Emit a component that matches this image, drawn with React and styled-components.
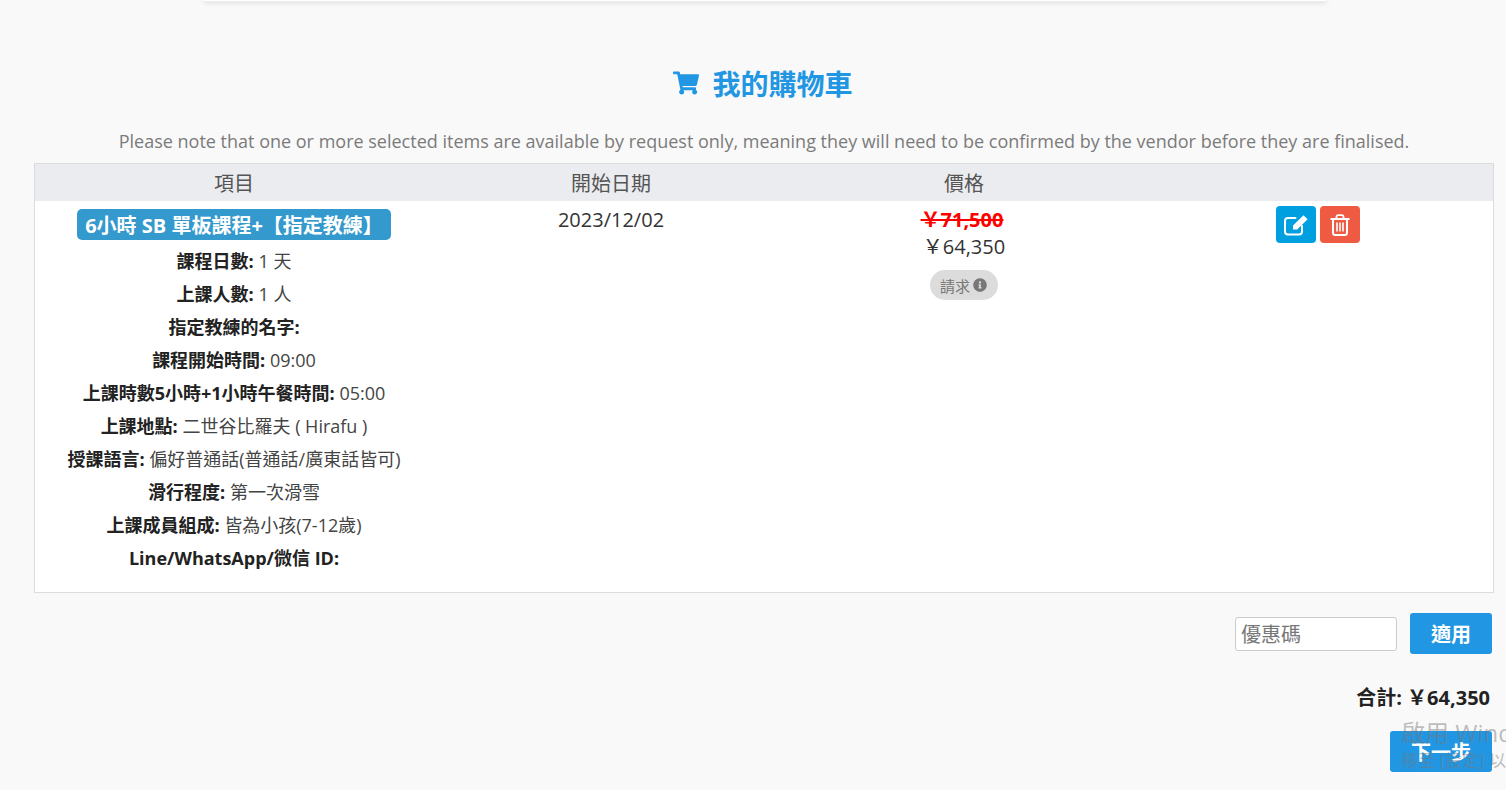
import React from 'react';
import styled, { createGlobalStyle } from 'styled-components';
import { FaShoppingCart, FaInfoCircle } from 'react-icons/fa';

const font = `'Open Sans', 'Noto Sans CJK TC', sans-serif`;

const GlobalStyle = createGlobalStyle`
  html, body {
    margin: 0;
    padding: 0;
    height: 790px;
    overflow: hidden;
    background: #f9f9f9;
    font-family: ${font};
  }
`;

const details = [
  ['課程日數:', '1 天'],
  ['上課人數:', '1 人'],
  ['指定教練的名字:', ''],
  ['課程開始時間:', '09:00'],
  ['上課時數5小時+1小時午餐時間:', '05:00'],
  ['上課地點:', '二世谷比羅夫 ( Hirafu )'],
  ['授課語言:', '偏好普通話(普通話/廣東話皆可)'],
  ['滑行程度:', '第一次滑雪'],
  ['上課成員組成:', '皆為小孩(7-12歲)'],
  ['Line/WhatsApp/微信 ID:', ''],
];

const EditIcon = () => (
  <svg width="26" height="22" viewBox="0 0 26 22" fill="none">
    <path
      d="M12.5 4H5C3.3 4 2 5.3 2 7v10.5c0 1.7 1.3 3 3 3h11c1.7 0 3-1.3 3-3V12"
      stroke="currentColor"
      strokeWidth="2"
      strokeLinecap="round"
    />
    <path
      d="M20.5 1.2 24.6 5.2 14.2 15.6H10V11.5Z"
      fill="currentColor"
    />
  </svg>
);

const TrashIcon = () => (
  <svg width="20" height="22" viewBox="0 0 20 22" fill="none" stroke="currentColor">
    <path d="M0.5 5H19.5" strokeWidth="2" />
    <path d="M6.5 4.5V2.8C6.5 1.8 7.2 1.2 8 1.2H12C12.8 1.2 13.5 1.8 13.5 2.8V4.5" strokeWidth="1.8" />
    <path d="M3 5V18.5C3 20 4 21 5.2 21H14.8C16 21 17 20 17 18.5V5" strokeWidth="2" />
    <path d="M7 8.5V17.5M10 8.5V17.5M13 8.5V17.5" strokeWidth="1.6" />
  </svg>
);

const App = () => {
  return (
    <Page>
      <GlobalStyle />
      <TopCard />
      <Title>
        <FaShoppingCart />
        <span>我的購物車</span>
      </Title>
      <Note>
        Please note that one or more selected items are available by request only, meaning they will need to be confirmed by the vendor before they are finalised.
      </Note>
      <Table>
        <HeaderRow>
          <HeaderCell>項目</HeaderCell>
          <HeaderCell>開始日期</HeaderCell>
          <HeaderCell>價格</HeaderCell>
          <HeaderCell />
        </HeaderRow>
        <BodyRow>
          <ItemCell>
            <ItemName>6小時 SB 單板課程+【指定教練】</ItemName>
            {details.map(([label, value]) => (
              <Detail key={label}>
                <b>{label}</b> {value}
              </Detail>
            ))}
          </ItemCell>
          <DateCell>2023/12/02</DateCell>
          <PriceCell>
            <OldPrice>￥71,500</OldPrice>
            <NewPrice>￥64,350</NewPrice>
            <RequestPill>
              請求 <FaInfoCircle />
            </RequestPill>
          </PriceCell>
          <ActionCell>
            <IconButton $color="#009fdf"><EditIcon /></IconButton>
            <IconButton $color="#ee5a42"><TrashIcon /></IconButton>
          </ActionCell>
        </BodyRow>
      </Table>
      <CouponRow>
        <CouponInput placeholder="優惠碼" />
        <ApplyButton>適用</ApplyButton>
      </CouponRow>
      <Total>合計: ￥64,350</Total>
      <NextRow>
        <NextButton>下一步</NextButton>
      </NextRow>
      <Watermark>
        <WatermarkTitle>啟用 Windows</WatermarkTitle>
        <WatermarkHint>移至 [設定] 以啟用 Windows。</WatermarkHint>
      </Watermark>
    </Page>
  );
};

const Page = styled.div`
  position: relative;
  height: 790px;
  overflow: hidden;
  padding: 0 14px 0 34px;
  box-sizing: border-box;
`;

const TopCard = styled.div`
  width: 1122px;
  height: 1px;
  margin-left: 170px;
  background: #fff;
  box-shadow: 0 1px 5px rgba(0, 0, 0, 0.4);
`;

const Title = styled.h2`
  display: flex;
  justify-content: center;
  align-items: center;
  gap: 13px;
  height: 40px;
  margin: 62px 0 0;
  font-size: 28px;
  font-weight: 700;
  color: #2196e3;

  svg {
    font-size: 26px;
  }
`;

const Note = styled.p`
  margin: 20px 0 0;
  padding-left: 2px;
  height: 40px;
  line-height: 37px;
  text-align: center;
  font-size: 18px;
  color: #7b7b7b;
  white-space: nowrap;
`;

const Table = styled.div`
  width: 1460px;
  height: 430px;
  box-sizing: border-box;
  border: 1px solid #dcdcdc;
  background: #fff;
`;

const columns = `
  display: grid;
  grid-template-columns: 398px 356px 350px 354px;
`;

const HeaderRow = styled.div`
  ${columns}
  height: 37px;
  background: #ebecef;
`;

const HeaderCell = styled.div`
  text-align: center;
  line-height: 39px;
  font-size: 20px;
  color: #555;
`;

const BodyRow = styled.div`
  ${columns}
`;

const ItemCell = styled.div`
  display: flex;
  flex-direction: column;
  align-items: center;
  padding-top: 8px;
`;

const ItemName = styled.div`
  height: 31px;
  line-height: 33px;
  padding: 0 8px;
  margin-bottom: 5px;
  border-radius: 5px;
  background: #3499cc;
  color: #fff;
  font-size: 20px;
  font-weight: 700;
  white-space: nowrap;
`;

const Detail = styled.div`
  height: 33px;
  line-height: 33px;
  font-size: 18px;
  color: #444;
  white-space: nowrap;

  b {
    color: #222;
  }
`;

const DateCell = styled.div`
  text-align: center;
  padding-top: 6px;
  line-height: 26px;
  font-size: 20px;
  color: #333;
`;

const PriceCell = styled.div`
  display: flex;
  flex-direction: column;
  align-items: center;
  padding-top: 6px;
`;

const OldPrice = styled.div`
  line-height: 26px;
  font-size: 20px;
  font-weight: 700;
  color: #f00;
  text-decoration: line-through;
  margin-right: 4px;
`;

const NewPrice = styled.div`
  line-height: 28px;
  font-size: 20px;
  color: #333;
`;

const RequestPill = styled.div`
  display: flex;
  align-items: center;
  gap: 3px;
  height: 30px;
  margin-top: 9px;
  padding: 0 11px 0 10px;
  border-radius: 15px;
  background: #dcdcdc;
  color: #777;
  font-size: 15px;

  svg {
    font-size: 14px;
  }
`;

const ActionCell = styled.div`
  display: flex;
  justify-content: center;
  gap: 4px;
  padding: 5px 0 0 4px;
`;

const IconButton = styled.button`
  display: flex;
  align-items: center;
  justify-content: center;
  width: 40px;
  height: 37px;
  padding: 0;
  border: none;
  border-radius: 4px;
  background: ${({ $color }) => $color};
  color: #fff;
`;

const CouponRow = styled.div`
  display: flex;
  justify-content: flex-end;
  align-items: center;
  gap: 13px;
  margin-top: 20px;
  height: 41px;
`;

const CouponInput = styled.input`
  width: 162px;
  height: 34px;
  box-sizing: border-box;
  padding: 2px 5px 0;
  border: 1px solid #ccc;
  border-radius: 3px;
  background: #fff;
  font-family: ${font};
  font-size: 20px;

  &::placeholder {
    color: #777;
  }
`;

const ApplyButton = styled.button`
  width: 82px;
  height: 41px;
  border: none;
  border-radius: 3px;
  background: #2196e3;
  color: #fff;
  font-family: ${font};
  font-size: 20px;
  font-weight: 700;
`;

const Total = styled.div`
  margin-top: 29px;
  padding-right: 2px;
  height: 30px;
  line-height: 30px;
  text-align: right;
  font-size: 20px;
  font-weight: 700;
  color: #222;
`;

const NextRow = styled.div`
  display: flex;
  justify-content: flex-end;
  margin-top: 18px;
`;

const NextButton = styled.button`
  width: 102px;
  height: 41px;
  border: none;
  border-radius: 3px;
  background: #2196e3;
  color: #fff;
  font-family: ${font};
  font-size: 20px;
  font-weight: 700;
`;

const Watermark = styled.div`
  position: absolute;
  left: 1401px;
  top: 717px;
  white-space: nowrap;
  color: rgba(120, 120, 120, 0.48);
  pointer-events: none;
`;

const WatermarkTitle = styled.div`
  font-size: 24px;
  line-height: 32px;
`;

const WatermarkHint = styled.div`
  font-size: 17px;
  line-height: 24px;
`;

export default App;
